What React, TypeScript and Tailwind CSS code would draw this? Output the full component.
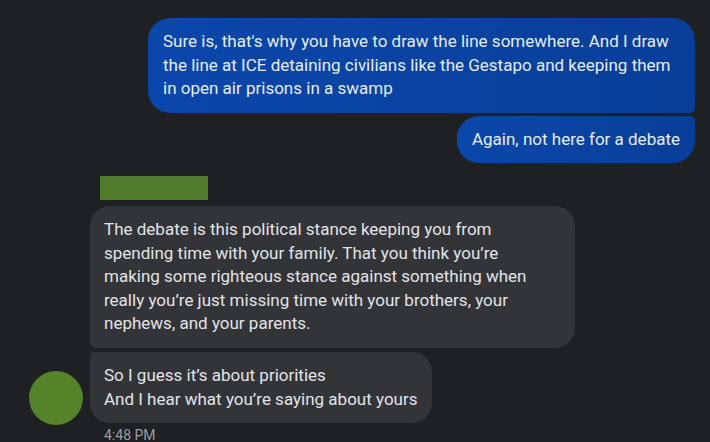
export default function App() {
  return (
    <div
      className="w-full h-[442px] overflow-hidden bg-[#1f2023] text-[17px] leading-[23.5px]"
      style={{ fontFamily: "Roboto, 'Liberation Sans', sans-serif" }}
    >
      {/* Sent messages */}
      <div className="flex flex-col items-end pt-[18px] pr-[15px] gap-[3px]">
        <div className="w-[547px] px-[15px] py-3 text-[#e8ecf5] rounded-[22px] rounded-br-[5px] bg-linear-to-r from-[#0b47ab] to-[#083e98] whitespace-nowrap">
          Sure is, that's why you have to draw the line somewhere. And I draw
          <br />
          the line at ICE detaining civilians like the Gestapo and keeping them
          <br />
          in open air prisons in a swamp
        </div>
        <div className="px-[15px] py-3 text-[#e8ecf5] rounded-[22px] rounded-tr-[5px] bg-linear-to-r from-[#0b47ab] to-[#083e98] whitespace-nowrap">
          Again, not here for a debate
        </div>
      </div>

      {/* Received messages */}
      <div className="mt-[13px] pl-[100px]">
        <div className="w-[108px] h-[24px] bg-[#507c2b]" />
      </div>
      <div className="flex mt-[6px]">
        <div className="w-[90px] flex items-end pl-[29px]">
          <div className="w-[54px] h-[54px] rounded-full bg-[#548329] translate-y-[2px]" />
        </div>
        <div className="flex flex-col items-start gap-[4px] text-[#e2e3e6]">
          <div className="w-[485px] px-[14px] py-3 leading-[23.6px] bg-[#333438] rounded-[20px] rounded-bl-[5px] whitespace-nowrap">
            The debate is this political stance keeping you from
            <br />
            spending time with your family. That you think you’re
            <br />
            making some righteous stance against something when
            <br />
            really you’re just missing time with your brothers, your
            <br />
            nephews, and your parents.
          </div>
          <div className="px-[14px] py-3 leading-[23.6px] bg-[#333438] rounded-[20px] rounded-tl-[5px] whitespace-nowrap">
            So I guess it’s about priorities
            <br />
            And I hear what you’re saying about yours
          </div>
        </div>
      </div>
      <div className="pl-[104px] pt-[3px] text-[14px] leading-[18px] text-[#9a9ca2]">
        4:48 PM
      </div>
    </div>
  );
}
